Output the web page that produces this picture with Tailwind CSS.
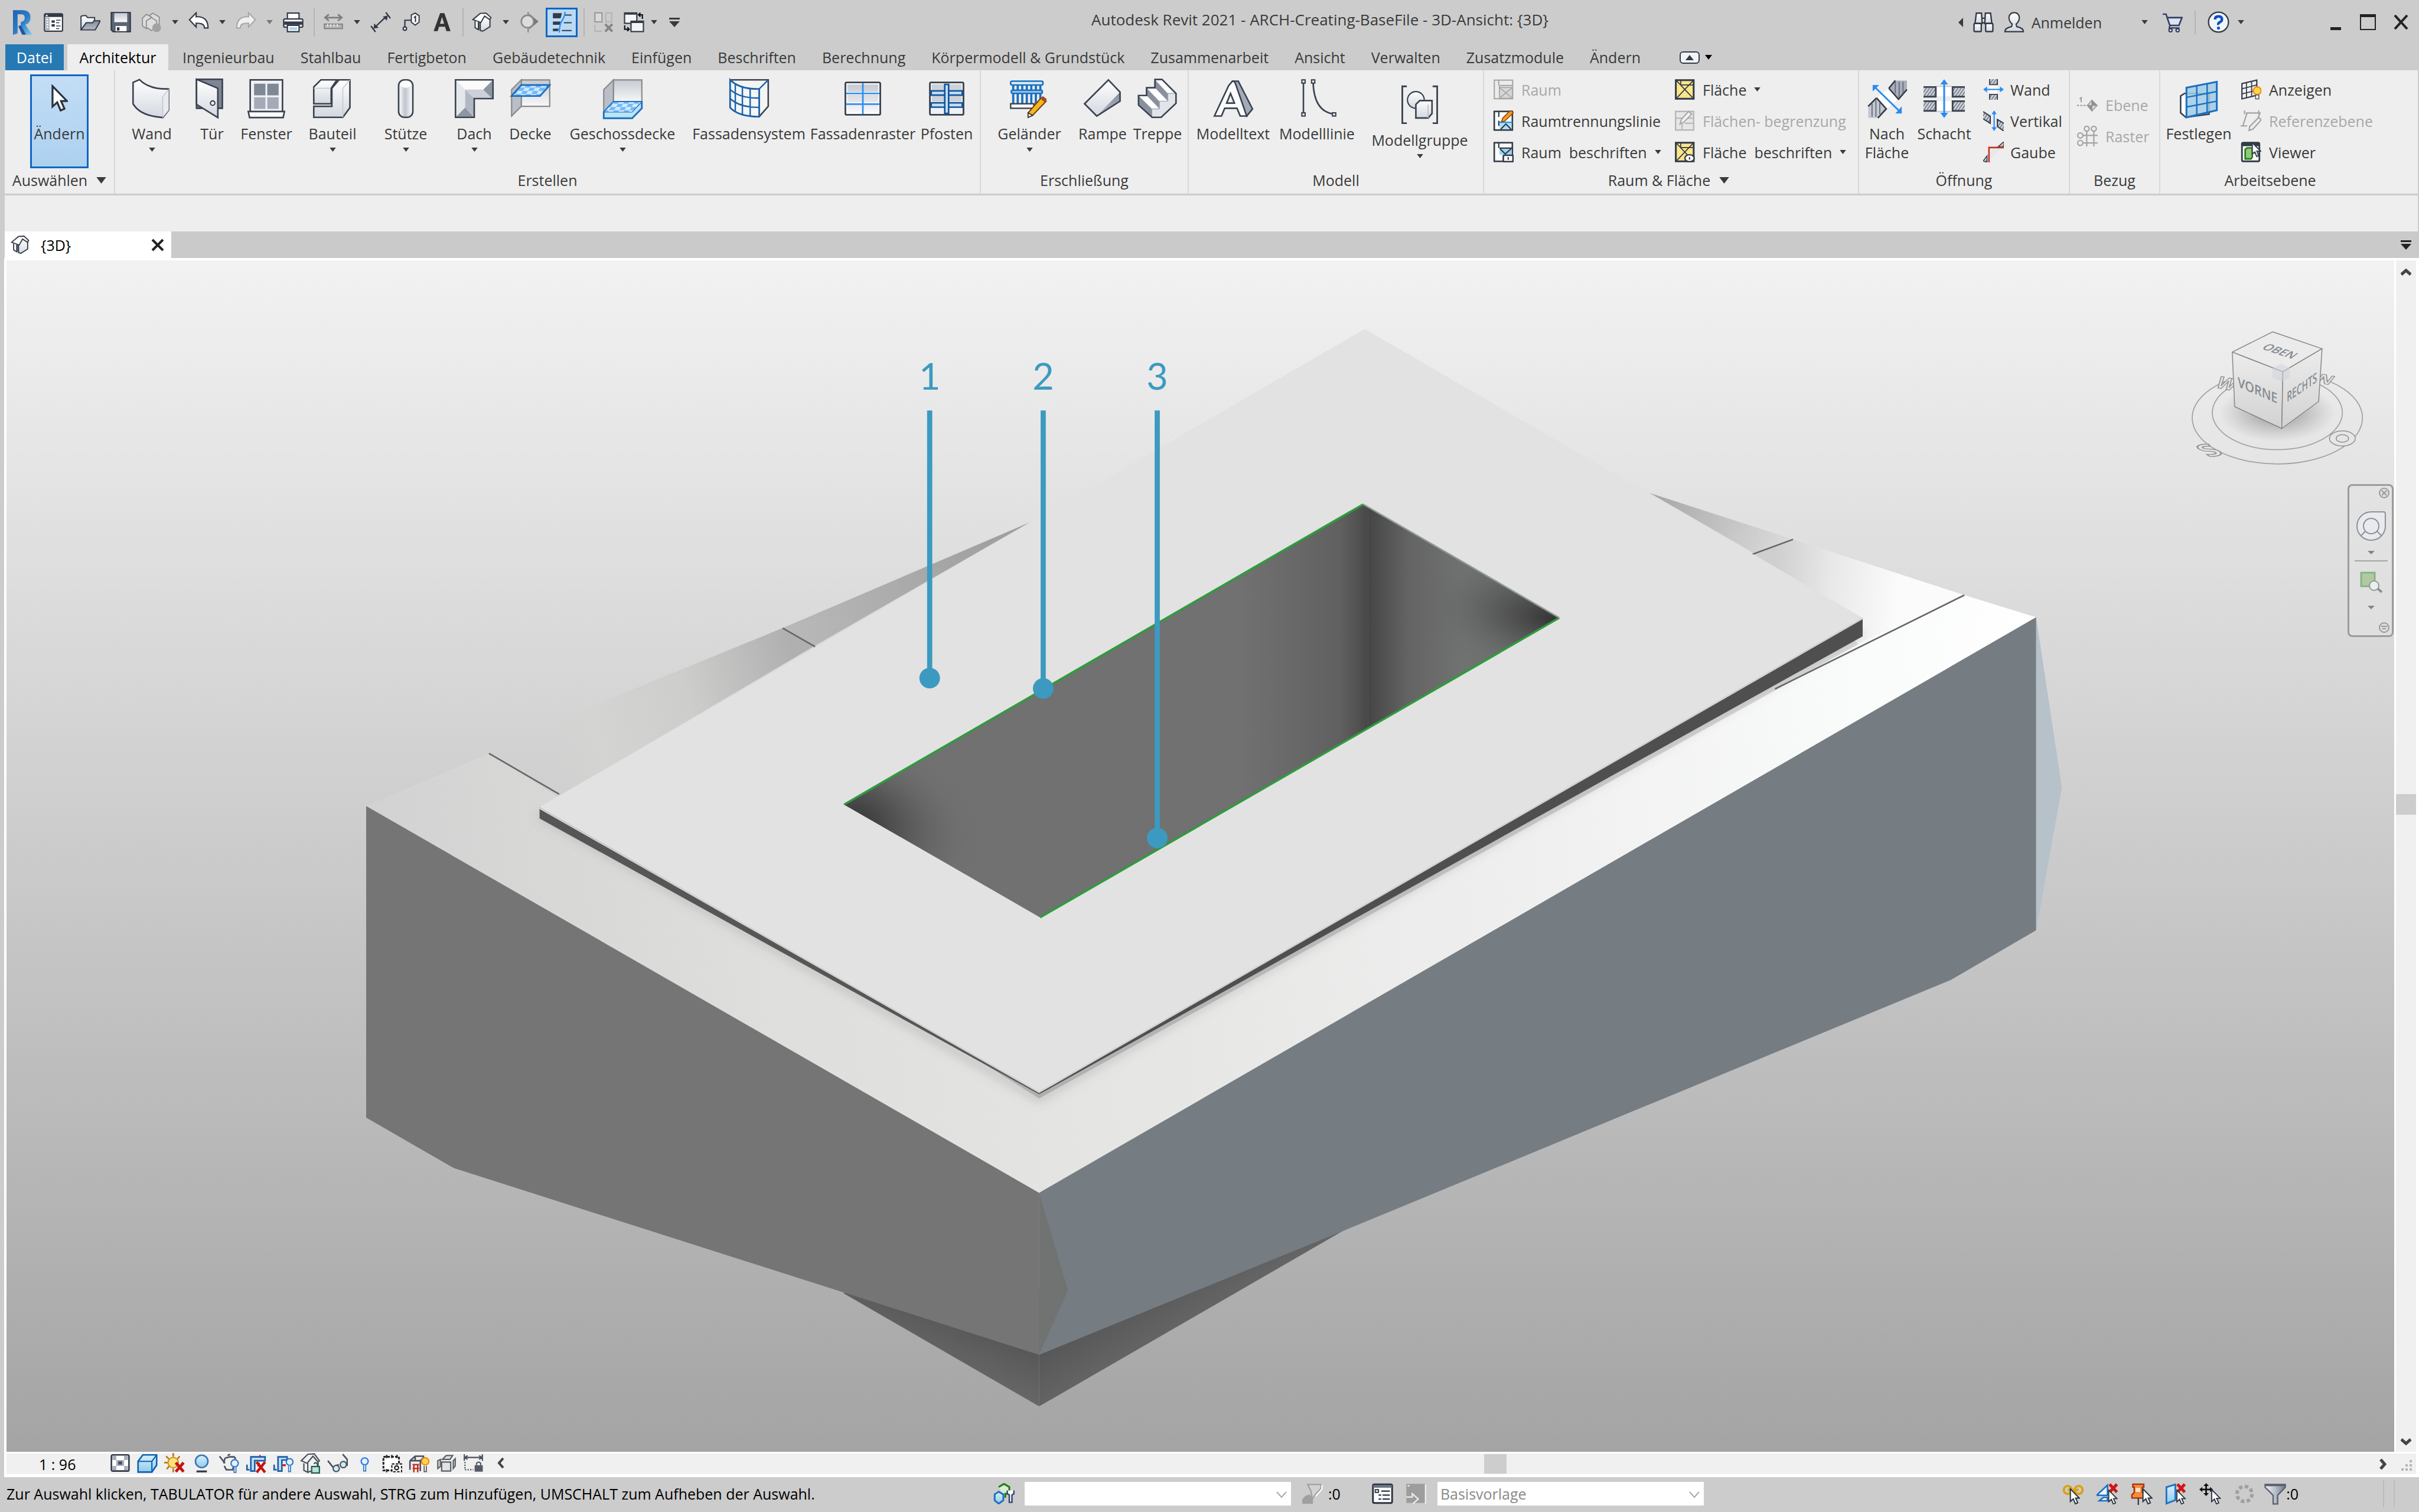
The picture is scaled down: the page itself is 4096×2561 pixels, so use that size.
<!DOCTYPE html>
<html lang="de">
<head>
<meta charset="utf-8">
<title>Autodesk Revit 2021 - ARCH-Creating-BaseFile - 3D-Ansicht: {3D}</title>
<script src="https://cdn.jsdelivr.net/npm/@tailwindcss/browser@4"></script>
</head>
<body class="min-h-screen flex flex-col bg-[#cccccc] text-[#3a3a3a] text-[25px] leading-8 font-['Open_Sans',sans-serif] whitespace-nowrap overflow-hidden">

<!-- Shared gradients and icon symbols -->
<svg class="absolute w-0 h-0" aria-hidden="true">
  <defs>
    <linearGradient id="gw" x1="0" y1="0" x2="0" y2="1"><stop offset="0" stop-color="#fff"/><stop offset="1" stop-color="#d3d7df"/></linearGradient>
    <linearGradient id="gd" x1="0" y1="0" x2="0" y2="1"><stop offset="0" stop-color="#868e9b"/><stop offset="1" stop-color="#b4bac5"/></linearGradient>
    <linearGradient id="gg" x1="0" y1="0" x2="0" y2="1"><stop offset="0" stop-color="#c6cad2"/><stop offset="1" stop-color="#f8f8fa"/></linearGradient>
    <linearGradient id="gh" x1="0" y1="0" x2="1" y2="0"><stop offset="0" stop-color="#fff"/><stop offset=".45" stop-color="#bfc5cf"/><stop offset="1" stop-color="#fff"/></linearGradient>
    <linearGradient id="gb" x1="0" y1="0" x2="0" y2="1"><stop offset="0" stop-color="#d9f0fc"/><stop offset="1" stop-color="#8fcbed"/></linearGradient>
    <linearGradient id="gr" x1="0" y1="0" x2="1" y2="1"><stop offset="0" stop-color="#1f62b5"/><stop offset=".5" stop-color="#2c7cc4"/><stop offset="1" stop-color="#7fd0f2"/></linearGradient>
    <linearGradient id="gf" x1="0" y1="0" x2="1" y2="0"><stop offset="0" stop-color="#f2f3f5"/><stop offset=".5" stop-color="#b9bfc9"/><stop offset="1" stop-color="#727985"/></linearGradient>
    <pattern id="tile" width="8" height="5" patternUnits="userSpaceOnUse" patternTransform="skewX(-30)"><path fill="#cfeafd" d="M0 0H8V5H0Z"/><path fill="#74b8f8" d="M0 0H4V2.5H0ZM4 2.5H8V5H4Z"/></pattern>
    <pattern id="hatch" width="2" height="2" patternUnits="userSpaceOnUse" patternTransform="rotate(35)"><path fill="#cdd1d9" d="M0 0H2V2H0Z"/><path fill="#7b828f" d="M0 0H.8V2H0Z"/></pattern>
    <symbol id="dn" viewBox="0 0 12 8"><path d="M0 0H12L6 8Z" fill="currentColor"/></symbol>
    <symbol id="cur" viewBox="0 0 8 13"><path d="M.8.8V10.4L3 8.4 4.6 12.2 6.4 11.4 4.8 7.8H7.6Z" fill="#fff" stroke="#2b3340" stroke-width=".9"/></symbol>
    <symbol id="redx" viewBox="0 0 7 7"><path d="M1 .8 6 6.2M6 .8 1 6.2" stroke="#d11414" stroke-width="2"/></symbol>

    <!-- title bar -->
    <symbol id="logo" viewBox="0 0 16 19"><path d="M1 0 4 2V18L1 19Z" fill="#153f86"/><path d="M1 0H9Q14.5.5 14.5 5.8 14.5 10 10.5 11.3L16 19H11L7 11.5V9Q10 9 10 5.8 10 3.2 7.4 3.2H4.5V18L1 19Z" fill="url(#gr)"/><path d="M7 11.5 11 19H8L5 12.5Z" fill="#1b56a6"/></symbol>
    <symbol id="q-sheet" viewBox="0 0 16 16"><rect x="1.5" y="1.5" width="14" height="13.5" rx="1" fill="#fff" stroke="#333b48"/><path d="M1.5 1.5H15.5V4H1.5Z" fill="#333b48"/><path d="M2.5 2.3H4V3.5H2.5Z" fill="#bfe3f7"/><path d="M2.2 4.5H5.5V14.3H2.2Z" fill="#aeb4bf"/><path d="M3 6H4.5M3 8H4.5M3 10H4.5M3 12H4.5" stroke="#fff"/><path d="M7 7.5H9.5M7 10.5H9.5" stroke="#333b48" stroke-width="1.8"/><path d="M10.5 6.5H14M10.5 8.5H13M10.5 11H14M10.5 13H13" stroke="#333b48" stroke-width=".7"/></symbol>
    <symbol id="q-open" viewBox="0 0 16 16"><path d="M1 14V3.5L2.5 3H5L6 4.5H11.5V8" fill="url(#gw)" stroke="#333b48" stroke-width=".9"/><path d="M1 14 5 8.5H10L11 7H16L12 14Z" fill="url(#gd)" stroke="#333b48" stroke-width=".9"/></symbol>
    <symbol id="q-save" viewBox="0 0 16 16"><path d="M.6.6H15.4V15.4H2L.6 14Z" fill="#5b6472" stroke="#2b3340" stroke-width=".9"/><path d="M3 1H13V8H3Z" fill="url(#gg)"/><path d="M4 11H12.5V15H4Z" fill="#fff"/><path d="M5 12H7V14.5H5Z" fill="#2b3340"/></symbol>
    <symbol id="q-sync" viewBox="0 0 16 16"><g fill="#dcdcdc" stroke="#8d8d8d" stroke-width=".8"><path d="M5 4 9 1 14 4V10L9 13 5 10Z"/><path d="M1 5 4 2 8 4V11L4 13 1 11Z"/><path d="M4 7 8 4.5 12 7V12L8 14.5 4 12Z"/></g><circle cx="12" cy="12.3" r="3.4" fill="#a2a2a2"/></symbol>
    <symbol id="q-undo" viewBox="0 0 16 16"><path d="M.8 6.2 6 .8V3.8Q15.2 3.4 15.2 12.5H12.4Q12.5 8.6 6 8.8V11.8Z" fill="#fff" stroke="currentColor"/></symbol>
    <symbol id="q-print" viewBox="0 0 16 16"><path d="M3.5 6V1H12.5V6" fill="#fff" stroke="#333b48"/><rect x=".6" y="5.5" width="14.8" height="6.5" rx="1" fill="url(#gw)" stroke="#333b48"/><path d="M1 7.5H15V10H1Z" fill="#333b48"/><path d="M3.5 10.5H12.5V15.4H3.5Z" fill="#fff" stroke="#333b48"/><path d="M5 12H11V14H5Z" fill="#a8d4f0"/></symbol>
    <symbol id="q-meas" viewBox="0 0 16 16"><path d="M2 4.5H14M4.5 2 1.5 4.5 4.5 7M11.500 2 14.500 4.500 11.500 7" stroke="#7d7d7d" stroke-width="1.200" fill="none"/><rect x="1" y="9.500" width="14" height="3.500" fill="#b5b5b5" stroke="#7d7d7d" stroke-width=".8"/><path d="M3.500 9.500V11.500M6 9.500V11.500M8.500 9.500V11.500M11 9.500V11.500" stroke="#eee" stroke-width=".8"/></symbol>
    <symbol id="q-dim" viewBox="0 0 16 16"><path d="M3.500 12 12.500 3.500M.5 11 4 15.500M12 .5 15.500 5" stroke="#333b48" stroke-width="1.100"/><path d="M2.500 13 3 9 6.500 12.300ZM13.500 2.800 9.700 3.800 12.800 6.900Z" fill="#333b48"/></symbol>
    <symbol id="q-tag" viewBox="0 0 16 16"><path d="M8 2.500 11 1 14 3V8L11 10.300 8 8Z" fill="#fff" stroke="#333b48" stroke-width=".9"/><path d="M10 4.500 11.200 3.600V8" stroke="#333b48" fill="none"/><path d="M8 6.500H3V12" stroke="#333b48" fill="none"/><circle cx="3" cy="13" r="1.300" fill="#fff" stroke="#333b48"/></symbol>
    <symbol id="q-a" viewBox="0 0 16 16"><path d="M6.500 1H9.800L14.600 15H11.400L10.300 11.500H5.700L4.600 15H1.500ZM6.400 9.300H9.600L8 4Z" fill="#333"/></symbol>
    <symbol id="q-home" viewBox="0 0 16 16"><path d="M7.500 8V14.800L2.500 12V6.500Z" fill="#6d7582"/><path d="M6.500 14.500V8.500L9.500 3.500 14 5V11.500L8.500 15Z" fill="url(#gw)" stroke="#333b48" stroke-width=".9"/><path d="M.8 6 6.500 1.200 11 1 14.800 4.500 13.800 6 9.800 3.300 7 8.300Z" fill="#fff" stroke="#333b48" stroke-width=".9"/><path d="M2.500 7V12.300L5 13.800V8" fill="#fff" stroke="#333b48" stroke-width=".9"/></symbol>
    <symbol id="q-sec" viewBox="0 0 16 16"><path d="M8 1.500 15 7.500 8 13.500Z" fill="#777"/><circle cx="6.500" cy="7.500" r="4.800" fill="#dcdcdc" stroke="#8a8a8a" stroke-width="1.200"/><path d="M7 0V3M7 12.500V16" stroke="#8a8a8a"/></symbol>
    <symbol id="q-thin" viewBox="0 0 16 16"><path d="M1 1H8L7 5H1ZM1 7.500H7L6.300 10H1ZM1 13H5.500L5 15H1Z" fill="#333b48"/><path d="M10 2.500H15.500M9.500 8.500H15.500M8 14.500H15.500" stroke="#333b48" stroke-width=".9"/><path d="M10.500 0 Q10 4 8 7 T6 16" stroke="#2b8bf2" fill="none"/></symbol>
    <symbol id="q-closeh" viewBox="0 0 16 16"><g fill="#dadada" stroke="#9a9a9a"><rect x="1.500" y=".8" width="5.500" height="7"/></g><g fill="none" stroke="#b5b5b5"><rect x="10" y=".8" width="4.500" height="7"/><path d="M1.500 10V15H7"/></g><path d="M9.500 9.500 15 15.300M15 9.500 9.500 15.300" stroke="#868686" stroke-width="1.800"/></symbol>
    <symbol id="q-switch" viewBox="0 0 16 16"><rect x=".7" y=".9" width="9.500" height="8" fill="#f4f5f7" stroke="#333b48"/><path d="M.7 1.500H10.200" stroke="#333b48" stroke-width="1.400"/><rect x="5.700" y="7.300" width="9.600" height="8" fill="#f4f5f7" stroke="#333b48"/><path d="M5.700 8H15.300" stroke="#333b48" stroke-width="1.400"/><path d="M12 2.300H14.500V5.500M13 .8 11.500 2.300 13 3.800M.8 10.500V13.500H3.500M2.800 12 4.300 13.500 2.800 15" stroke="#111" fill="none"/></symbol>
    <symbol id="q-bino" viewBox="0 0 16 16"><g fill="url(#gw)" stroke="#333b48" stroke-width="1.100"><path d="M6.500 5H9.500V8.500H6.500Z"/><path d="M2.500 1H6.500L7 9H1.500Z"/><path d="M9.500 1H13.500L14.500 9H9Z"/><rect x=".7" y="9" width="5.600" height="6.300" rx=".8"/><rect x="9.700" y="9" width="5.600" height="6.300" rx=".8"/></g></symbol>
    <symbol id="q-user" viewBox="0 0 16 16"><path d="M.8 15.400Q.8 12.500 6 11.500L6.500 9.500Q4 7.500 4 4.500 4.300.6 8 .6T12 4.500Q12 7.500 9.500 9.500L10 11.500Q15.200 12.500 15.200 15.400Z" fill="url(#gw)" stroke="#333b48"/></symbol>
    <symbol id="q-cart" viewBox="0 0 16 16"><path d="M.5 1.800H3L6 10.500H13L15.400 4.500H4" fill="#dde4f2" stroke="#333d63" stroke-width="1.200"/><path d="M6 10.500 5.500 12.500H13.500" fill="none" stroke="#333d63"/><circle cx="6.500" cy="14.300" r="1.200" fill="#fff" stroke="#333d63"/><circle cx="12" cy="14.300" r="1.200" fill="#fff" stroke="#333d63"/></symbol>
    <symbol id="q-help" viewBox="0 0 16 16"><circle cx="8" cy="8" r="7.300" fill="#f2f4f8" stroke="#333b48"/><path d="M5.500 6Q5.500 3.800 8 3.800T10.500 6Q10.500 7.300 9 8T8 10" fill="none" stroke="#0d4fc4" stroke-width="1.900"/><circle cx="8" cy="12.300" r="1.100" fill="#0d4fc4"/></symbol>

    <!-- ribbon, large -->
    <symbol id="b-wand" viewBox="0 0 32 32"><path d="M1.500 3.500 6.500 1.300Q14 9 29 8.500V25L24.500 30.700Q7 29.500 1.500 20Z" fill="url(#gw)" stroke="#3b4350" stroke-width="1.200"/><path d="M24.500 14.500 29 8.800V25L24.500 30.500Z" fill="#e9ebef" stroke="#b5bac4" stroke-width=".5"/></symbol>
    <symbol id="b-tur" viewBox="0 0 32 32"><path d="M4 1H24V23.500H4Z" fill="#7e8693" stroke="#3b4350" stroke-width="1.200"/><path d="M4 1 20.500 8V30.700L4 20.500Z" fill="url(#gw)" stroke="#3b4350" stroke-width="1.200"/><circle cx="16.500" cy="19.500" r="1.700" fill="#fff" stroke="#3b4350"/></symbol>
    <symbol id="b-fen" viewBox="0 0 32 32"><rect x="3.500" y="1.500" width="25" height="25" fill="#f1f2f5" stroke="#3b4350" stroke-width="1.200"/><path d="M6.500 4.500H15.300V13.500H6.500ZM16.700 4.500H25.500V13.500H16.700Z" fill="#808896"/><path d="M6.500 15H15.300V24H6.500ZM16.700 15H25.500V24H16.700Z" fill="#a4abb7"/><path d="M2 26H30L29 30.700H3Z" fill="#fff" stroke="#3b4350" stroke-width="1.200"/></symbol>
    <symbol id="b-bau" viewBox="0 0 32 32"><path d="M1.500 30.500V22H15.500V8L21 1.500H29.500V23L24 30.500Z" fill="url(#gw)" stroke="#3b4350" stroke-width="1.200"/><path d="M24 30.500V8L29.500 1.500" fill="none" stroke="#c5c9d1" stroke-width=".7"/><path d="M1.500 20V7L7 1.500H19.500L15 8V20Z" fill="url(#gw)" stroke="#3b4350" stroke-width="1.200"/><path d="M1.500 8H14.500" stroke="#c5c9d1" stroke-width=".7"/></symbol>
    <symbol id="b-stu" viewBox="0 0 32 32"><rect x="10.500" y="1.500" width="11" height="29" rx="4.500" fill="url(#gh)" stroke="#3b4350" stroke-width="1.200"/><ellipse cx="16" cy="4.800" rx="4.400" ry="2.800" fill="#fff"/></symbol>
    <symbol id="b-dach" viewBox="0 0 32 32"><path d="M1.500 1.500H30.500V16.500H16V30.500H1.500Z" fill="#e4e7ec"/><path d="M2 2 30 2 23 9H9Z" fill="#fbfbfc"/><path d="M9 9H23L30 16H16Z" fill="#ccd0d8"/><path d="M30 2V16L23 9Z" fill="#8d95a3"/><path d="M2 30H15.500L9 23Z" fill="#8d95a3"/><path d="M9 9 16 16V30L9 23Z" fill="#b2b8c3"/><path d="M1.500 1.500H30.500V16H16V30.500H1.500Z" fill="none" stroke="#3b4350" stroke-width="1.200"/></symbol>
    <symbol id="b-decke" viewBox="0 0 32 32"><path d="M9 1.500H31V22H9Z" fill="url(#gg)" stroke="#8a8a8a"/><path d="M1.500 9 9 1.500V22L1.500 29.500Z" fill="#b9bec7" stroke="#8a8a8a"/><path d="M9 5.500H31L23.500 14H1.500Z" fill="url(#tile)" stroke="#1c6fc0" stroke-width="1.300"/></symbol>
    <symbol id="b-gesch" viewBox="0 0 32 32"><path d="M9 1.500H31V19H9Z" fill="url(#gg)" stroke="#8a8a8a"/><path d="M1.500 9 9 1.500V19L1.500 27Z" fill="#b9bec7" stroke="#8a8a8a"/><path d="M9 18.500H31V23.500L23.500 31.200H1.500V26.500Z" fill="#b9e5f6" stroke="#1c6fc0" stroke-width="1.300"/><path d="M9 18.500H31L23.500 26.500H1.500Z" fill="url(#tile)" stroke="#1c6fc0" stroke-width=".5"/></symbol>
    <symbol id="b-fsys" viewBox="0 0 32 32"><path d="M1.500 1.500H31V22L24 30" fill="#f4f4f4" stroke="#3b4350" stroke-width="1.200"/><path d="M1.500 1.500Q9 9 24 8.500V30Q8 30 1.500 23Z" fill="#f4f6f9" stroke="#1d62ab" stroke-width="1.300"/><path d="M24 8.500 31 1.500M5.500 4.500V26.500M11 7V29M17 8.300V29.800M1.500 9Q9 16 24 15.500M1.500 16Q9 23 24 22.800" fill="none" stroke="#1d62ab" stroke-width="1.100"/></symbol>
    <symbol id="b-fras" viewBox="0 0 32 32"><rect x="2.500" y="3.500" width="27" height="25" rx="1" fill="#fff" stroke="#3b4350" stroke-width="1.300"/><path d="M4 5H28V11H4ZM4 13H28V19H4ZM4 21H28V27H4Z" fill="url(#gg)"/><path d="M16 4V28M3 12H29M3 20.300H29" stroke="#2b8bf2" stroke-width="1.200"/></symbol>
    <symbol id="b-pfo" viewBox="0 0 32 32"><rect x="3" y="3.500" width="26" height="25" rx="1" fill="#eff0f3" stroke="#3b4350" stroke-width="1.300"/><path d="M4.500 5H27.500V9H4.500ZM4.500 14H27.500V18.500H4.500Z" fill="#cdd1d8"/><g fill="#bfe0f6" stroke="#14539c" stroke-width="1.200"><path d="M4 10H28V13.300H4ZM4 19.300H28V22.600H4Z"/><path d="M14.500 5H17.500V27.500H14.500Z"/></g></symbol>
    <symbol id="b-gel" viewBox="0 0 32 32"><path d="M3.500 5V20M7 5V20M10.500 5V20M14 5V20M17.500 5V20M21 5V20M24.500 5V17" stroke="#1c6fc0" stroke-width="1.700"/><g fill="#d5ecf9" stroke="#1c6fc0" stroke-width="1.200"><rect x="1.500" y="2.500" width="25" height="3" rx="1"/><rect x="2" y="9.500" width="24" height="2.500" rx="1" fill="#8cc2ea"/></g><rect x="1.500" y="20" width="18" height="3.500" fill="#fff" stroke="#3b4350" stroke-width="1.100"/><path d="M15 30.500V27L25 15.500 29 18 18.500 29Z" fill="#f9b41a" stroke="#6b3b12" stroke-width=".9"/><path d="M24.500 16 26.500 14 29.500 16.500 28 19Z" fill="#a84a1c"/><path d="M15 30.500V27L18.500 29Z" fill="#fff" stroke="#333" stroke-width=".8"/></symbol>
    <symbol id="b-ram" viewBox="0 0 32 32"><path d="M2 20 20.500 1.500 29.500 11V18L11.500 29.500Z" fill="url(#gw)"/><path d="M29.500 11V18L11.500 29.500Z" fill="url(#gd)"/><path d="M2 20 20.500 1.500 29.500 11V18L11.500 29.500Z" fill="none" stroke="#3b4350" stroke-width="1.200"/></symbol>
    <symbol id="b-tre" viewBox="0 0 32 32"><path d="M1.300 13.600H7.500V7.600H14V1.200H19.500L30.300 12V19.600L18.800 30.500H11.800L1.300 21Z" fill="#e1e5ea"/><path d="M14 1.200 24 12V18L14 7.600ZM7.500 7.600 17.500 18V24L7.500 13.600ZM1.300 13.600 11.800 24V30.500L1.300 21Z" fill="#8a919e"/><path d="M14 1.200H19.500L30.300 12H24ZM7.500 7.600H14L24 18H17.500ZM1.300 13.600H7.500L17.500 24H11.800Z" fill="#fff"/><path d="M30.300 12H24V18H17.500V24H11.800" fill="none" stroke="#a4aab5" stroke-width=".6"/><path d="M1.300 13.600H7.500V7.600H14V1.200H19.500L30.300 12V19.600L18.800 30.500H11.800L1.300 21Z" fill="none" stroke="#3b4350" stroke-width="1.200"/></symbol>
    <symbol id="b-mtext" viewBox="0 0 32 32"><path d="M15.500 2.500H20L31 24 26.500 29.500 14 6Z" fill="#a3abb8" stroke="#3b4350" stroke-width="1.200"/><path d="M1.500 29.500 12.500 6 15.500 2.500Q17 2 18 5L26.500 29.500H21.500L19 23.500H9.500L7 29.500ZM11 19.500H17L14 12Z" fill="#fafbfc" stroke="#3b4350" stroke-width="1.200"/></symbol>
    <symbol id="b-mlin" viewBox="0 0 32 32"><path d="M5.500 3V28.500M13 3Q13.500 26 29 28" fill="none" stroke="#3b4350" stroke-width="1.200"/><g fill="#fff" stroke="#3b4350"><rect x="4.300" y="1.500" width="2.500" height="2.500"/><rect x="11.800" y="1.500" width="2.500" height="2.500"/><rect x="4.300" y="27" width="2.500" height="2.500"/><rect x="28" y="27" width="2.500" height="2.500"/></g></symbol>
    <symbol id="b-mgr" viewBox="0 0 32 32"><path d="M6 1.500H2.500V30H6M26 1.500H29.500V30H26" fill="none" stroke="#3b4350" stroke-width="1.300"/><circle cx="13" cy="12" r="6.500" fill="url(#gw)" stroke="#3b4350"/><path d="M13 15.500 16 12.500H25.500V22.500L22.500 26H13Z" fill="url(#gw)" stroke="#3b4350" stroke-width="1.200"/><path d="M22.500 26V15.500" stroke="#b5bac4" stroke-width=".7"/></symbol>
    <symbol id="b-nach" viewBox="0 0 32 32"><path d="M17.500 8 22.500 2H31.500V9L25 16.500Z" fill="#a8afbb"/><path d="M1.500 22 8 15.500 15.500 24 9 31H1.500Z" fill="#c3c8d1"/><path d="M8 15.500 17.500 8 25 16.500 15.500 24Z" fill="#fff"/><path d="M17.500 8 25 16.500 31.500 9M17.500 8 22.500 2M8 15.500 15.500 24 9 31M8 15.500 1.500 22" fill="none" stroke="#333b48" stroke-width="1.200"/><path d="M22.500 3V12M25.500 3V15M28.500 3V12M4.500 20V30M7.500 17V30M10.500 19V28" stroke="#626a77" stroke-width=".8"/><path d="M6.500 7 26 26" stroke="#2b8bf2" stroke-width="1.300"/><path d="M5 5.500H10L5 10.500ZM27.500 27.500V22L22.500 27.500Z" fill="#2b8bf2"/></symbol>
    <symbol id="b-scha" viewBox="0 0 32 32"><path d="M1 7H31V14H1ZM1 18H31V25.500H1Z" fill="#fff"/><g fill="url(#hatch)"><path d="M0 7H10V14H0ZM0 18H10V25.500H0ZM22 7H32V14H22ZM22 18H32V25.500H22Z"/></g><path d="M0 7H9.500V14.500H0M0 18H9.500V25.500H0M32 7H22.500V14.500H32M32 18H22.500V25.500H32" fill="none" stroke="#3b4350" stroke-width="1.300"/><path d="M10 6.500H22M10 26H22" stroke="#c9ccd2"/><path d="M16 3V29" stroke="#2b8bf2" stroke-width="1.400"/><path d="M16 1 19 5H13ZM16 31 19 27H13Z" fill="#2b8bf2"/></symbol>
    <symbol id="b-fest" viewBox="0 0 32 32"><path d="M2 14 5 12H24V28L6 30.500 2 27Z" fill="#fff" stroke="#3b4350" stroke-width="1.200"/><path d="M6.500 7.500 30 3V25L6.500 30.500Z" fill="#9dcbe6" fill-opacity=".85" stroke="#1c6fc0" stroke-width="1.400"/><path d="M14.500 6V29M22.500 4.500V27.500M6.500 15 30 10.500M6.500 22.500 30 18" stroke="#1c6fc0" stroke-width="1.100"/></symbol>

    <!-- ribbon, small -->
    <symbol id="s-raumg" viewBox="0 0 16 16"><rect x="1" y=".8" width="14.200" height="14.400" fill="#ececec" stroke="#a9a9a9"/><path d="M4.500 1V5M5 5H15M5 5V11" stroke="#a9a9a9"/><path d="M5 6.500H15V14.800H5ZM5 6.500 15 14.800M15 6.500 5 14.800" fill="#d8d8d8" stroke="#a9a9a9" stroke-width=".8"/></symbol>
    <symbol id="s-rtl" viewBox="0 0 16 16"><rect x="1" y=".8" width="14" height="14.400" fill="#fff" stroke="#333b48" stroke-width="1.200"/><path d="M4.500 1V5M4.500 8V12" stroke="#333b48"/><path d="M5 9.500H14.400V14.600H5Z" fill="#aee0f5"/><path d="M6 14.600 10 10.500 14 14.600" fill="none" stroke="#333b48"/><path d="M5 9.200H15" stroke="#2b8bf2"/><path d="M6.500 9 7.500 6 13.500 0 15.800 1.800 9.300 8.200Z" fill="#f39c1a" stroke="#8a3a10" stroke-width=".7"/></symbol>
    <symbol id="s-rb" viewBox="0 0 16 16"><rect x="1" y=".8" width="14" height="14.400" fill="#fff" stroke="#333b48" stroke-width="1.200"/><path d="M4.500 1V5M5 5H15" stroke="#333b48"/><path d="M5 5.500H14.500V10H5Z" fill="#9bd6f0"/><path d="M5.500 5.500 9.500 9.500 14 5.500" fill="none" stroke="#333b48"/><rect x="8" y="10.500" width="7.500" height="5" rx=".6" fill="#fff" stroke="#333b48" stroke-width="1.200"/><path d="M11.800 12V14" stroke="#333b48"/></symbol>
    <symbol id="s-fl" viewBox="0 0 16 16"><rect x="1.200" y=".8" width="13.800" height="14.400" fill="#fce58a" stroke="#333b48" stroke-width="1.400"/><path d="M5 1V4M5 4.500H15M1.500 1 14.800 15M14.800 1 1.500 15" stroke="#333b48" stroke-width=".8"/></symbol>
    <symbol id="s-flb" viewBox="0 0 16 16"><rect x="1" y=".8" width="14" height="14.400" fill="#e6e6e6" stroke="#b3b3b3"/><path d="M1 6H15M6 10V15M8 10H15" stroke="#b9b9b9"/><path d="M4.500 10.500 5.500 7 11 .8 13.500 2.800 7.500 9Z" fill="#f2f2f2" stroke="#a9a9a9"/></symbol>
    <symbol id="s-ft" viewBox="0 0 16 16"><rect x="1.200" y=".8" width="13.800" height="14.400" fill="#fce58a" stroke="#333b48" stroke-width="1.400"/><path d="M5 1V4M5 4.500H15M1.500 1 10 10M14.800 1 1.500 15" stroke="#333b48" stroke-width=".8"/><ellipse cx="11.800" cy="12.800" rx="3.600" ry="2.700" fill="#fff" stroke="#333b48" stroke-width="1.100"/><path d="M11.800 12V13.800" stroke="#333b48"/></symbol>
    <symbol id="s-wand" viewBox="0 0 16 16"><path d="M5 0H11V4H5ZM5 12H11V16H5Z" fill="url(#hatch)"/><path d="M5 4H11V12H5Z" fill="#fff"/><path d="M5 0V4.300H11V0M5 16V11.800H11V16" fill="none" stroke="#333b48" stroke-width=".8"/><path d="M2 8H14" stroke="#2b8bf2"/><path d="M0 8 3 5.700V10.300ZM16 8 13 5.700V10.300Z" fill="#2b8bf2"/></symbol>
    <symbol id="s-vert" viewBox="0 0 16 16"><path d="M0 1 6 5V10L0 6.500ZM11 7 16 10V16L11 12.500Z" fill="url(#hatch)"/><path d="M0 1 5.500 4.500V10L0 6.500M16 10 11 7V12.500L16 16" fill="none" stroke="#333b48" stroke-width=".9"/><path d="M8.500 2V14" stroke="#2b8bf2"/><path d="M8.500 0 10.500 3H6.500ZM8.500 16 10.500 13H6.500Z" fill="#2b8bf2"/></symbol>
    <symbol id="s-gau" viewBox="0 0 16 16"><path d="M0 16V13L12 1 16 0V3L4 15Z" fill="#e6e8ec"/><path d="M0 15 3 11V16ZM11.500 4 16 0V4Z" fill="url(#hatch)" stroke="#333b48" stroke-width=".7"/><path d="M4.500 16V4.500H16" fill="none" stroke="#c8321f" stroke-width="1.200"/></symbol>
    <symbol id="s-eb" viewBox="0 0 16 16"><path d="M0 8.500H8" stroke="#9c9c9c" stroke-dasharray="1.500 1"/><path d="M2 3.500 3.200 2.500V6" stroke="#9c9c9c" fill="none" stroke-width=".9"/><path d="M11.500 4V13M7.500 8.500H16M8 8.500 11.500 4.500 15.500 8.500 11.500 12.800Z" fill="#dedede" stroke="#9c9c9c" stroke-width=".8"/><path d="M11.500 4.500 15.500 8.500H11.500ZM11.500 12.800 8 8.500H11.500Z" fill="#8f8f8f"/></symbol>
    <symbol id="s-ra" viewBox="0 0 16 16"><g fill="none" stroke="#a3a3a3"><circle cx="2.500" cy="7.500" r="2"/><circle cx="2.500" cy="13.300" r="2"/><circle cx="7.500" cy="2.300" r="1.900"/><circle cx="13" cy="2.300" r="1.900"/><path d="M7.500 4.500V16M13 4.500V16M4.500 7.500H16M4.500 13.300H16"/></g></symbol>
    <symbol id="s-anz" viewBox="0 0 16 16"><path d="M1 3.500 12.500.8V12.500L1 15.300Z" fill="#f2f2f4" stroke="#333b48"/><path d="M4.500 2.800V14.500M8.500 2V13.500M1 7.500 12.500 4.500M1 11.500 12.500 8.500" stroke="#333b48" stroke-width=".8"/><circle cx="12.800" cy="9" r="3" fill="#ffd84a" stroke="#f08a12"/><rect x="11.600" y="12.300" width="2.500" height="3" fill="#fff" stroke="#555" stroke-width=".7"/></symbol>
    <symbol id="s-ref" viewBox="0 0 16 16"><path d="M4 2H15L11 12M5 2 1.500 12.500M3 0V3M14 0V3M0 12H5" fill="none" stroke="#a3a3a3"/><path d="M6.500 15.500 7 12.500 14 5.500 16 7.300 9.500 14.500Z" fill="#ededed" stroke="#a3a3a3"/></symbol>
    <symbol id="s-view" viewBox="0 0 16 16"><rect x="1" y=".8" width="13.500" height="14.400" rx="1" fill="#fff" stroke="#333b48" stroke-width="1.300"/><path d="M1 1H14.500V3.500H1Z" fill="#333b48"/><path d="M3.500 6 5 4.800H9V12L8 13.300H3.500Z" fill="#8fc879" stroke="#237a1b" stroke-width="1.200"/><path d="M9 .8V9.500L11 8 12.500 11.500 14 10.800 12.600 7.300H15.500Z" fill="#fff" stroke="#333b48" stroke-width=".9"/></symbol>

    <!-- view control bar -->
    <symbol id="v1" viewBox="0 0 16 16"><rect x="1.200" y="1.500" width="13.600" height="12.500" rx="1" fill="#fff" stroke="#333b48" stroke-width="1.200"/><path d="M2 2.300H5V5.500H2ZM11 2.300H14V5.500H11ZM5 5.500H11V10H5ZM2 10H5V13.300H2ZM11 10H14V13.300H11Z" fill="#a9afba"/><path d="M6.500 6.500H9.500V9H6.500Z" fill="#4a515d"/></symbol>
    <symbol id="v2" viewBox="0 0 16 16"><path d="M.8 6.500 4.500 1.500H15.200V9.500L11.500 14.800H.8Z" fill="url(#gb)" stroke="#0d63b5" stroke-width="1.200"/><path d="M.8 6.500H11.500L15.200 1.500M11.500 6.500V14.800" fill="none" stroke="#0d63b5"/></symbol>
    <symbol id="v3" viewBox="0 0 16 16"><path d="M7 0V3M7 12V15M0 7.500H3M1.500 2.500 4 5M12 2.500 10 5M2 12.500 4 10" stroke="#b07a18" stroke-width="1.200"/><circle cx="7" cy="7.500" r="4" fill="#ffe27a" stroke="#d29a1c"/><path d="M9 7.500 15 14.500M15 7.500 9 14.500" stroke="#c41212" stroke-width="2.200"/></symbol>
    <symbol id="v4" viewBox="0 0 16 16"><circle cx="8" cy="6.500" r="4.800" fill="url(#gb)" stroke="#3a78b0" stroke-width="1.200"/><path d="M4 14.300H12" stroke="#333b48" stroke-width="1.500"/></symbol>
    <symbol id="v5" viewBox="0 0 16 16"><path d="M5 4 9 3H12L13 4 11 13H6L4.500 10M5 8 .8 2.500M7 2 9 1M5 4 4 8" fill="none" stroke="#4a515d" stroke-width="1.200"/><circle cx="12.500" cy="8" r="2.800" fill="#e5f2ff" stroke="#2b79c9"/><path d="M12 11V15H13.500V11" fill="#fff" stroke="#2b79c9" stroke-width=".8"/></symbol>
    <symbol id="v6" viewBox="0 0 16 16"><path d="M4 3H15V6H7V14H4ZM1 9V13H3" fill="#bcdcf5" stroke="#1c5ea8" stroke-width="1.200"/><path d="M11 1.500V3M8 8H11M9 10H11" stroke="#d11414"/><path d="M8.500 7 15 15M15 7 8.500 15" stroke="#c41212" stroke-width="2"/></symbol>
    <symbol id="v7" viewBox="0 0 16 16"><path d="M4 3H11V5.500H7V14H4ZM1 9V13H3" fill="#bcdcf5" stroke="#1c5ea8" stroke-width="1.200"/><path d="M7.500 9.500H10" stroke="#d11414" stroke-width="1.500"/><circle cx="13" cy="7" r="2.600" fill="#e5f2ff" stroke="#2b79c9"/><path d="M12.200 10V14.500H13.700V10" fill="#fff" stroke="#2b79c9" stroke-width=".8"/></symbol>
    <symbol id="v8" viewBox="0 0 16 16"><path d="M1 6 6 1 11 .6 15 6 14 7 10 2.500 5.500 8ZM3 8V13.500L6 15V8M6 15 8.500 14M14 7V10" fill="#eff0f3" stroke="#4a515d"/><rect x="9" y="10.500" width="6" height="5" fill="#b9e3dc" stroke="#24584f"/><path d="M13.500 10.500V8.500Q12 6.500 10.800 8.500" fill="none" stroke="#24584f"/></symbol>
    <symbol id="v9" viewBox="0 0 16 16"><path d="M.5 6 4.500 11M9 9 6 10M12 1 15.500 5V10" fill="none" stroke="#4a515d" stroke-width="1.200"/><circle cx="7" cy="12" r="2.400" fill="#cdeef3" stroke="#4a515d"/><circle cx="12.500" cy="9" r="2.400" fill="#cdeef3" stroke="#4a515d"/></symbol>
    <symbol id="v10" viewBox="0 0 16 16"><circle cx="8" cy="6.500" r="2.700" fill="#e5f2ff" stroke="#2b79e9"/><path d="M7.200 9.500V14H8.800V9.500" fill="#fff" stroke="#2b79c9" stroke-width=".8"/></symbol>
    <symbol id="v11" viewBox="0 0 16 16"><rect x="1.500" y="3" width="12" height="10.500" fill="#fff" stroke="#222" stroke-width="1.400" stroke-dasharray="2 1"/><path d="M4 1.500V4M8 1.500V4M12 1.500V4M4 12.500V15" stroke="#222"/><rect x="8" y="8.500" width="7.500" height="6" fill="#fff" stroke="#222" stroke-dasharray="2 1"/><circle cx="11.700" cy="11.500" r="1.500" fill="none" stroke="#222"/></symbol>
    <symbol id="v12" viewBox="0 0 16 16"><path d="M1 6 5 2.500H12M1 6H9V14M9 6 12 3M1 6V13M5 2.500V6" fill="none" stroke="#4a515d" stroke-width="1.200"/><path d="M3 9H8M4 9V15M7 9V15M3 12H8" stroke="#c8321f" stroke-width="1.200"/><circle cx="12.800" cy="6.500" r="2.800" fill="#ffd84a" stroke="#f08a12"/><path d="M12 10V14.500H13.700V10" fill="#fff" stroke="#555" stroke-width=".8"/></symbol>
    <symbol id="v13" viewBox="0 0 16 16"><g fill="#e2e2e2" stroke="#5a5f68"><path d="M5 5 8 2H13L11 5ZM13.500 6 15 4.500V10L13.500 12ZM1.500 6V12L3.500 10.500V5Z"/><path d="M4.500 7H11.500V14H4.500Z"/></g></symbol>
    <symbol id="v14" viewBox="0 0 16 16"><path d="M1 1V6M15 1V6M1 3.500H15M3.500 2 1.500 3.500 3.500 5M12.500 2 14.500 3.500 12.500 5" fill="none" stroke="#4a515d"/><path d="M1.500 7V13H8" fill="none" stroke="#4a515d" stroke-dasharray="1 1"/><rect x="9" y="9.500" width="6.300" height="5" fill="#555b66"/><path d="M10.500 9.500V8Q12 6 13.700 8V9.500" fill="none" stroke="#555b66"/></symbol>

    <!-- status bar -->
    <symbol id="t-ws" viewBox="0 0 16 16"><path d="M4 3 8 .6 12 3V8H9V11" fill="#d8efcf" stroke="#237a1b" stroke-width="1.400"/><path d="M1 8.500 4 6.500 7.500 8.500V13L4 15.500 1 13Z" fill="url(#gb)" stroke="#1c6fc0" stroke-width="1.300"/><path d="M10.500 5.500V8L12 9V14.500H14V9L15.500 8V5.500" fill="#fff" stroke="#34466e" stroke-width="1.100"/></symbol>
    <symbol id="t-ef" viewBox="0 0 16 16"><path d="M.5 15.500V12L3 9.500 6 8.500 8.500 12V15.500Z" fill="#a0a0a0"/><path d="M4.500 1H14.500V4L10 9 8 12 7 6Z" fill="#d2d2d2" stroke="#a0a0a0"/><path d="M15.300 1.500V4.500L10.500 10" fill="none" stroke="#fff"/></symbol>
    <symbol id="t-do" viewBox="0 0 16 16"><rect x=".8" y="1" width="14.400" height="14" rx="1" fill="#fff" stroke="#2b3340" stroke-width="1.300"/><path d="M1 1.500H15V3.500H1Z" fill="#6b7482"/><path d="M2.500 5H5V7H2.500Z" fill="none" stroke="#2b3340" stroke-width=".8"/><path d="M7 6H13.500M5 9H7M8 9H13.500M5 12H7M8 12H13.500" stroke="#2b3340"/></symbol>
    <symbol id="t-act" viewBox="0 0 16 16"><path d="M1 .5H15V15H1V12H5V9L9 12V15H1Z" fill="#9d9d9d"/><path d="M1 10.500H5.500V8L10 12 6 15.500M15.500 1V15.500M2 2H3.500" stroke="#eee" fill="none"/></symbol>
    <symbol id="t-link" viewBox="0 0 16 16"><g fill="none" stroke="#d9a312" stroke-width="1.700"><circle cx="4" cy="5" r="2.900"/><circle cx="12" cy="5" r="2.900"/><path d="M4 5H12"/></g><use href="#cur" x="5" y="3.500" width="8" height="12.500"/></symbol>
    <symbol id="t-und" viewBox="0 0 16 16"><path d="M0 9 8 1.500V9ZM2 13 5 10.500H8V13Z" fill="#e8f3fb" stroke="#1c6fc0" stroke-width="1.100"/><use href="#redx" x="8.500" y="0" width="7.500" height="7.500"/><use href="#cur" x="8" y="4.500" width="7.500" height="11.500"/></symbol>
    <symbol id="t-pin" viewBox="0 0 16 16"><path d="M1.500.8H9.500V3H8.500V7L10 8.500V11H.8V8.500L2.500 7V3H1.500Z" fill="#f58a3c" stroke="#a3340e"/><path d="M3.500 3.500H7V6.500H3.500Z" fill="#ffe0c0"/><path d="M5.500 11V16" stroke="#333b48"/><use href="#cur" x="8" y="3.500" width="8" height="12.500"/></symbol>
    <symbol id="t-face" viewBox="0 0 16 16"><path d="M1 3 7.500 1V12.500L1 15Z" fill="url(#gb)" stroke="#1c6fc0" stroke-width="1.200"/><use href="#redx" x="8" y="0" width="7.500" height="7.500"/><use href="#cur" x="7.500" y="4.500" width="8" height="11.500"/></symbol>
    <symbol id="t-drag" viewBox="0 0 16 16"><path d="M5 1V8.500M1 4.700H9" stroke="#111" stroke-width="1.200"/><path d="M5 0 7 2.200H3ZM5 9.500 7 7.300H3ZM0 4.700 2.200 2.800V6.600ZM10 4.700 7.800 2.800V6.600Z" fill="#111"/><use href="#cur" x="8" y="4" width="8" height="12"/></symbol>
    <symbol id="t-gear" viewBox="0 0 16 16"><circle cx="8" cy="8" r="5.500" fill="none" stroke="#a0a0a0" stroke-width="2.600" stroke-dasharray="2.600 1.720"/></symbol>
    <symbol id="t-fil" viewBox="0 0 16 16"><path d="M.6 1H15.400V3L9.800 9V15.300H6.500V9L.6 3Z" fill="url(#gf)" stroke="#5a616d"/><path d="M.6 1.500H15.400" stroke="#5a616d" stroke-width="1.500"/></symbol>
  </defs>
</svg>

<!-- Title bar -->
<header class="h-[75px] shrink-0 flex items-center relative pl-5 pr-[18px]">
  <nav class="flex items-center gap-[17px]" aria-label="Schnellzugriff">
    <button aria-label="Revit"><svg class="block w-[35px] h-[42px]"><use href="#logo"/></svg></button>
    <button class="mr-[11px]" aria-label="Start"><svg class="block size-[35px]"><use href="#q-sheet"/></svg></button>
    <button aria-label="Öffnen"><svg class="block size-[35px]"><use href="#q-open"/></svg></button>
    <button aria-label="Speichern"><svg class="block size-[35px]"><use href="#q-save"/></svg></button>
    <button aria-label="Synchronisieren"><svg class="block size-[35px]"><use href="#q-sync"/></svg></button>
    <svg class="w-[11px] h-[7px]"><use href="#dn"/></svg>
    <button class="text-[#333b48]" aria-label="Rückgängig"><svg class="block size-[35px]"><use href="#q-undo"/></svg></button>
    <svg class="w-[11px] h-[7px]"><use href="#dn"/></svg>
    <button class="text-[#9a9a9a] -scale-x-100" aria-label="Wiederholen"><svg class="block size-[35px] opacity-70"><use href="#q-undo"/></svg></button>
    <svg class="w-[11px] h-[7px] text-[#777]"><use href="#dn"/></svg>
    <button aria-label="Drucken"><svg class="block size-[35px]"><use href="#q-print"/></svg></button>
    <span class="w-0.5 h-12 bg-[#b4b4b4] -mr-[3px]"></span>
    <button aria-label="Messen"><svg class="block size-[35px]"><use href="#q-meas"/></svg></button>
    <svg class="w-[11px] h-[7px]"><use href="#dn"/></svg>
    <button aria-label="Bemaßung"><svg class="block size-[35px]"><use href="#q-dim"/></svg></button>
    <button aria-label="Beschriftung"><svg class="block size-[35px]"><use href="#q-tag"/></svg></button>
    <button aria-label="Text"><svg class="block size-[35px]"><use href="#q-a"/></svg></button>
    <span class="w-0.5 h-12 bg-[#b4b4b4] -mr-[3px]"></span>
    <button aria-label="3D-Ansicht"><svg class="block size-[35px]"><use href="#q-home"/></svg></button>
    <svg class="w-[11px] h-[7px]"><use href="#dn"/></svg>
    <button aria-label="Schnitt"><svg class="block size-[35px]"><use href="#q-sec"/></svg></button>
    <button class="-mx-[7px] w-[54px] h-[50px] border-[3px] border-[#0f66c3] bg-[#b9daf6] flex items-center justify-center" aria-label="Dünne Linien"><svg class="size-[35px]"><use href="#q-thin"/></svg></button>
    <span class="w-0.5 h-12 bg-[#b4b4b4] -mr-[3px]"></span>
    <button aria-label="Verdeckte schließen"><svg class="block size-[35px]"><use href="#q-closeh"/></svg></button>
    <button aria-label="Fenster wechseln"><svg class="block size-[35px]"><use href="#q-switch"/></svg></button>
    <svg class="-ml-[6px] w-[11px] h-[7px]"><use href="#dn"/></svg>
    <button class="ml-[3px]" aria-label="Anpassen"><svg class="block w-[18px] h-4" viewBox="0 0 18 16"><path d="M0 0H18V3H0ZM0 6H18L9 16Z" fill="#3a3a3a"/></svg></button>
  </nav>
  <h1 class="absolute left-[1848px] top-[17px] text-[26px]">Autodesk Revit 2021 - ARCH-Creating-BaseFile - 3D-Ansicht: {3D}</h1>
  <div class="ml-auto flex items-center">
    <svg class="w-2 h-4" viewBox="0 0 8 16"><path d="M8 0V16L0 8Z" fill="#3a3a3a"/></svg>
    <button class="ml-[17px]" aria-label="Suchen"><svg class="block size-[35px]"><use href="#q-bino"/></svg></button>
    <button class="ml-[17px] flex items-center gap-3"><svg class="size-[35px]"><use href="#q-user"/></svg>Anmelden</button>
    <svg class="ml-[67px] w-[11px] h-[7px]"><use href="#dn"/></svg>
    <button class="ml-6" aria-label="App Store"><svg class="block size-[35px]"><use href="#q-cart"/></svg></button>
    <span class="ml-5 w-0.5 h-10 bg-[#b4b4b4]"></span>
    <button class="ml-5" aria-label="Hilfe"><svg class="block size-[37px]"><use href="#q-help"/></svg></button>
    <svg class="ml-[14px] w-[11px] h-[7px]"><use href="#dn"/></svg>
    <button class="ml-[146px]" aria-label="Minimieren"><svg class="block w-[18px] h-[27px]" viewBox="0 0 18 27"><path d="M0 22H18V27H0Z" fill="#222"/></svg></button>
    <button class="ml-8" aria-label="Maximieren"><svg class="block size-[27px]" viewBox="0 0 27 27"><path d="M1 1H26V26H1Z" fill="none" stroke="#222" stroke-width="2"/><path d="M0 3H27" stroke="#222" stroke-width="4"/></svg></button>
    <button class="ml-[30px]" aria-label="Schließen"><svg class="block size-[25px]" viewBox="0 0 25 25"><path d="M2 1 23 24M23 1 2 24" stroke="#222" stroke-width="4"/></svg></button>
  </div>
</header>

<!-- Ribbon tabs -->
<nav class="h-11 shrink-0 flex pl-[9px]" aria-label="Menüband">
  <button class="w-[99px] mr-[6px] bg-[#2779b3] text-white">Datei</button>
  <button class="w-[171px] bg-[#eeeeee] text-black mr-0.5">Architektur</button>
  <button class="px-[22px]">Ingenieurbau</button>
  <button class="px-[22px]">Stahlbau</button>
  <button class="px-[22px]">Fertigbeton</button>
  <button class="px-[22px]">Gebäudetechnik</button>
  <button class="px-[22px]">Einfügen</button>
  <button class="px-[22px]">Beschriften</button>
  <button class="px-[22px]">Berechnung</button>
  <button class="px-[22px]">Körpermodell &amp; Grundstück</button>
  <button class="px-[22px]">Zusammenarbeit</button>
  <button class="px-[22px]">Ansicht</button>
  <button class="px-[22px]">Verwalten</button>
  <button class="px-[22px]">Zusatzmodule</button>
  <button class="px-[22px]">Ändern</button>
  <button class="ml-11 flex items-center gap-[9px] text-black" aria-label="Multifunktionsleiste minimieren"><svg class="w-[34px] h-[21px]" viewBox="0 0 34 21"><rect x="1" y="1" width="32" height="19" rx="5" fill="#f2f3f6" stroke="#333b48" stroke-width="2"/><path d="M10 15H24L17 6Z" fill="#333b48"/></svg><svg class="w-3 h-2"><use href="#dn"/></svg></button>
</nav>

<!-- Ribbon panels -->
<main class="flex-1 flex flex-col min-h-0">
<section class="shrink-0 ml-2 mr-0.5 h-[212px] bg-[#eeeeee] border-b-[3px] border-[#cccccc] flex">
  <div class="w-[187px] border-r-2 border-[#d9d9d9] flex flex-col">
    <button class="mt-[7px] ml-[43px] w-[99px] h-[159px] border-[3px] border-[#0f66c3] bg-linear-to-b from-[#c3ddf5] to-[#add1f0] flex flex-col items-center"><svg class="mt-[14px] w-[29px] h-[47px]"><use href="#cur"/></svg><span class="mt-[20px]">Ändern</span></button>
    <div class="mt-1 flex items-center justify-center gap-[15px]">Auswählen<svg class="w-[17px] h-[11px]"><use href="#dn"/></svg></div>
  </div>
  <div class="w-[1466px] border-r-2 border-[#d9d9d9] flex flex-col">
    <div class="h-[170px] flex items-start pl-[5px] pt-[13px]">
      <button class="w-[114px] flex flex-col items-center"><svg class="size-[70px] mb-2"><use href="#b-wand"/></svg>Wand<svg class="mt-2 w-[11px] h-[7px]"><use href="#dn"/></svg></button>
      <button class="w-[90px] flex flex-col items-center"><svg class="size-[70px] mb-2"><use href="#b-tur"/></svg>Tür</button>
      <button class="w-[94px] flex flex-col items-center"><svg class="size-[70px] mb-2"><use href="#b-fen"/></svg>Fenster</button>
      <button class="w-[130px] flex flex-col items-center"><svg class="size-[70px] mb-2"><use href="#b-bau"/></svg>Bauteil<svg class="mt-2 w-[11px] h-[7px]"><use href="#dn"/></svg></button>
      <button class="w-[118px] flex flex-col items-center"><svg class="size-[70px] mb-2"><use href="#b-stu"/></svg>Stütze<svg class="mt-2 w-[11px] h-[7px]"><use href="#dn"/></svg></button>
      <button class="w-[114px] flex flex-col items-center"><svg class="size-[70px] mb-2"><use href="#b-dach"/></svg>Dach<svg class="mt-2 w-[11px] h-[7px]"><use href="#dn"/></svg></button>
      <button class="w-[76px] flex flex-col items-center"><svg class="size-[70px] mb-2"><use href="#b-decke"/></svg>Decke</button>
      <button class="w-[236px] flex flex-col items-center"><svg class="size-[70px] mb-2"><use href="#b-gesch"/></svg>Geschossdecke<svg class="mt-2 w-[11px] h-[7px]"><use href="#dn"/></svg></button>
      <button class="w-[192px] flex flex-col items-center"><svg class="size-[70px] mb-2"><use href="#b-fsys"/></svg>Fassadensystem</button>
      <button class="w-[194px] flex flex-col items-center"><svg class="size-[70px] mb-2"><use href="#b-fras"/></svg>Fassadenraster</button>
      <button class="w-[90px] flex flex-col items-center"><svg class="size-[70px] mb-2"><use href="#b-pfo"/></svg>Pfosten</button>
    </div>
    <div class="text-center">Erstellen</div>
  </div>
  <div class="w-[352px] border-r-2 border-[#d9d9d9] flex flex-col">
    <div class="h-[170px] flex items-start pl-[7px] pt-[13px]">
      <button class="w-[150px] flex flex-col items-center"><svg class="size-[70px] mb-2"><use href="#b-gel"/></svg>Geländer<svg class="mt-2 w-[11px] h-[7px]"><use href="#dn"/></svg></button>
      <button class="w-[98px] flex flex-col items-center"><svg class="size-[70px] mb-2"><use href="#b-ram"/></svg>Rampe</button>
      <button class="w-[88px] flex flex-col items-center"><svg class="size-[70px] mb-2"><use href="#b-tre"/></svg>Treppe</button>
    </div>
    <div class="text-center">Erschließung</div>
  </div>
  <div class="w-[500px] border-r-2 border-[#d9d9d9] flex flex-col">
    <div class="h-[170px] flex items-start pl-[5px] pt-[13px]">
      <button class="w-[140px] flex flex-col items-center"><svg class="size-[70px] mb-2"><use href="#b-mtext"/></svg>Modelltext</button>
      <button class="w-[144px] flex flex-col items-center"><svg class="size-[70px] mb-2"><use href="#b-mlin"/></svg>Modelllinie</button>
      <button class="mt-[11px] w-[204px] flex flex-col items-center"><svg class="size-[70px] mb-2"><use href="#b-mgr"/></svg>Modellgruppe<svg class="mt-2 w-[11px] h-[7px]"><use href="#dn"/></svg></button>
    </div>
    <div class="text-center">Modell</div>
  </div>
  <div class="w-[635px] border-r-2 border-[#d9d9d9] flex flex-col">
    <div class="h-[170px] flex items-start pl-[15px] pt-[6px]">
      <div class="w-[307px] flex flex-col">
        <button disabled class="h-[53px] flex items-center gap-[13px] text-[#a8a8a8]"><svg class="size-[35px]"><use href="#s-raumg"/></svg>Raum</button>
        <button class="h-[53px] flex items-center gap-[13px]"><svg class="size-[35px]"><use href="#s-rtl"/></svg>Raumtrennungslinie</button>
        <button class="h-[53px] flex items-center gap-[13px]"><svg class="size-[35px]"><use href="#s-rb"/></svg>Raum&nbsp; beschriften<svg class="w-[11px] h-[7px]"><use href="#dn"/></svg></button>
      </div>
      <div class="flex flex-col">
        <button class="h-[53px] flex items-center gap-[13px]"><svg class="size-[35px]"><use href="#s-fl"/></svg>Fläche<svg class="w-[11px] h-[7px]"><use href="#dn"/></svg></button>
        <button disabled class="h-[53px] flex items-center gap-[13px] text-[#a8a8a8]"><svg class="size-[35px]"><use href="#s-flb"/></svg>Flächen- begrenzung</button>
        <button class="h-[53px] flex items-center gap-[13px]"><svg class="size-[35px]"><use href="#s-ft"/></svg>Fläche&nbsp; beschriften<svg class="w-[11px] h-[7px]"><use href="#dn"/></svg></button>
      </div>
    </div>
    <div class="flex items-center justify-center gap-[15px] pr-2">Raum &amp; Fläche<svg class="w-[17px] h-[11px]"><use href="#dn"/></svg></div>
  </div>
  <div class="w-[357px] border-r-2 border-[#d9d9d9] flex flex-col">
    <div class="h-[170px] flex items-start pl-[2px]">
      <button class="mt-[13px] w-[90px] flex flex-col items-center"><svg class="size-[70px] mb-2"><use href="#b-nach"/></svg>Nach<br>Fläche</button>
      <button class="mt-[13px] w-[104px] flex flex-col items-center"><svg class="size-[70px] mb-2"><use href="#b-scha"/></svg>Schacht</button>
      <div class="mt-[6px] ml-[14px] flex flex-col">
        <button class="h-[53px] flex items-center gap-[11px]"><svg class="size-[35px]"><use href="#s-wand"/></svg>Wand</button>
        <button class="h-[53px] flex items-center gap-[11px]"><svg class="size-[35px]"><use href="#s-vert"/></svg>Vertikal</button>
        <button class="h-[53px] flex items-center gap-[11px]"><svg class="size-[35px]"><use href="#s-gau"/></svg>Gaube</button>
      </div>
    </div>
    <div class="text-center">Öffnung</div>
  </div>
  <div class="w-[153px] border-r-2 border-[#d9d9d9] flex flex-col text-[#a8a8a8]">
    <div class="h-[170px] flex flex-col pl-3 pt-8">
      <button disabled class="h-[53px] flex items-center gap-[13px]"><svg class="size-[35px]"><use href="#s-eb"/></svg>Ebene</button>
      <button disabled class="h-[53px] flex items-center gap-[13px]"><svg class="size-[35px]"><use href="#s-ra"/></svg>Raster</button>
    </div>
    <div class="text-center text-[#3a3a3a]">Bezug</div>
  </div>
  <div class="w-[372px] flex flex-col">
    <div class="h-[170px] flex items-start pl-[2px]">
      <button class="mt-[13px] w-[126px] flex flex-col items-center"><svg class="size-[70px] mb-2"><use href="#b-fest"/></svg>Festlegen</button>
      <div class="mt-[6px] ml-[8px] flex flex-col">
        <button class="h-[53px] flex items-center gap-[13px]"><svg class="size-[35px]"><use href="#s-anz"/></svg>Anzeigen</button>
        <button disabled class="h-[53px] flex items-center gap-[13px] text-[#a8a8a8]"><svg class="size-[35px]"><use href="#s-ref"/></svg>Referenzebene</button>
        <button class="h-[53px] flex items-center gap-[13px]"><svg class="size-[35px]"><use href="#s-view"/></svg>Viewer</button>
      </div>
    </div>
    <div class="text-center">Arbeitsebene</div>
  </div>
</section>

<!-- Options bar -->
<div class="h-[61px] shrink-0 ml-2 mr-0.5 bg-[#eeeeee]"></div>

<!-- View tabs -->
<div class="h-[45px] shrink-0 ml-2 flex items-center bg-[#cacaca] pr-[13px]">
  <div class="self-stretch w-[282px] bg-white flex items-center pl-[10px] pr-3">
    <svg class="size-[33px]"><use href="#q-home"/></svg><button class="ml-[18px] text-black">{3D}</button>
    <button class="ml-auto" aria-label="Ansicht schließen"><svg class="block size-[22px]" viewBox="0 0 22 22"><path d="M2 2 20 20M20 2 2 20" stroke="#222" stroke-width="4"/></svg></button>
  </div>
  <button class="ml-auto" aria-label="Ansichten"><svg class="block w-[18px] h-4" viewBox="0 0 18 16"><path d="M0 0H18V3H0ZM0 6H18L9 16Z" fill="#222"/></svg></button>
</div>

<!-- Drawing area -->
<div class="flex-1 min-h-0 ml-[7px] pl-1 pt-1 pb-[3px] bg-white flex gap-[3px]">
  <div class="flex-1 relative min-w-0">
    <svg class="absolute inset-0 w-full h-full" viewBox="13 505 4627 2310" preserveAspectRatio="none" role="img" aria-label="3D-Modell">
      <defs>
        <linearGradient id="bg" x1="0" y1="0" x2="0" y2="1"><stop offset="0" stop-color="#f2f2f2"/><stop offset="1" stop-color="#a4a4a4"/></linearGradient>
        <linearGradient id="strip" gradientUnits="userSpaceOnUse" x1="710" y1="1560" x2="3945" y2="1200"><stop offset="0" stop-color="#d2d2d2"/><stop offset=".22" stop-color="#dededc"/><stop offset=".45" stop-color="#e6e6e5"/><stop offset=".7" stop-color="#f0f0f0"/><stop offset=".9" stop-color="#fafbfb"/><stop offset="1" stop-color="#fff"/></linearGradient>
        <linearGradient id="ul" gradientUnits="userSpaceOnUse" x1="1020" y1="1420" x2="1540" y2="1290"><stop offset="0" stop-color="#d2d2d1" stop-opacity="0"/><stop offset=".25" stop-color="#d4d4d3"/><stop offset=".6" stop-color="#cdcdcc"/><stop offset="1" stop-color="#b0b0b0"/></linearGradient>
        <linearGradient id="ul2" gradientUnits="userSpaceOnUse" x1="1550" y1="1240" x2="1996" y2="1012"><stop offset="0" stop-color="#b8b8b8"/><stop offset=".5" stop-color="#a9a9a9"/><stop offset="1" stop-color="#9c9c9c"/></linearGradient>
        <linearGradient id="ur" gradientUnits="userSpaceOnUse" x1="3200" y1="960" x2="3460" y2="1080"><stop offset="0" stop-color="#a6a6a6"/><stop offset="1" stop-color="#dcdcdc"/></linearGradient>
        <linearGradient id="ur2" gradientUnits="userSpaceOnUse" x1="3440" y1="1110" x2="3680" y2="1130"><stop offset="0" stop-color="#cfcfcf"/><stop offset=".45" stop-color="#e8e8e8"/><stop offset="1" stop-color="#fbfbfb"/></linearGradient>
        <linearGradient id="pitL" gradientUnits="userSpaceOnUse" x1="2400" y1="0" x2="2652" y2="0"><stop offset="0" stop-color="#707170"/><stop offset=".4" stop-color="#686968"/><stop offset=".78" stop-color="#5f605f"/><stop offset=".92" stop-color="#525252"/><stop offset="1" stop-color="#464646"/></linearGradient>
        <linearGradient id="pitR" gradientUnits="userSpaceOnUse" x1="2650" y1="0" x2="2830" y2="0"><stop offset="0" stop-color="#454545"/><stop offset=".2" stop-color="#525352"/><stop offset=".45" stop-color="#636463"/><stop offset="1" stop-color="#707271"/></linearGradient>
        <radialGradient id="cor"><stop offset="0" stop-color="#333" stop-opacity=".95"/><stop offset=".3" stop-color="#3a3a3a" stop-opacity=".6"/><stop offset=".6" stop-color="#444" stop-opacity=".25"/><stop offset=".85" stop-color="#555" stop-opacity=".05"/><stop offset="1" stop-color="#555" stop-opacity="0"/></radialGradient>
        <linearGradient id="low1" gradientUnits="userSpaceOnUse" x1="1850" y1="2560" x2="1800" y2="2680"><stop offset="0" stop-color="#585858"/><stop offset="1" stop-color="#6c6d6c"/></linearGradient>
        <linearGradient id="low2" gradientUnits="userSpaceOnUse" x1="2200" y1="2500" x2="2260" y2="2600"><stop offset="0" stop-color="#555"/><stop offset="1" stop-color="#656665"/></linearGradient>
        <filter id="soft" x="-5%" y="-5%" width="110%" height="110%"><feGaussianBlur stdDeviation="10"/></filter>
        <clipPath id="hole"><path d="M2642 978 3022 1198 2016 1779 1636 1560Z"/></clipPath>
        <clipPath id="top"><path d="M710 1563 948 1461 1050 1560 2014 2120 3609 1215 3807 1154 3946 1197 2014 2313Z"/></clipPath>
      </defs>
      <path d="M13 505H4640V2815H13Z" fill="url(#bg)"/>
      <path d="M1634 2507 2014 2727 2014 2500Z" fill="url(#low1)"/>
      <path d="M2014 2500V2727L2606 2385Z" fill="url(#low2)"/>
      <path d="M3946 1197 3996 1527 3946 1804Z" fill="#b7c1c9"/>
      <path d="M1996 1013 1517 1218 1578 1253Z" fill="url(#ul2)"/>
      <path d="M1517 1218 1150 1368 960 1462 1081 1545 1578 1253Z" fill="url(#ul)"/>
      <path d="M3197 956 3475 1046 3400 1073Z" fill="url(#ur)"/>
      <path d="M3475 1046 3807 1154 3610 1260 3560 1200 3398 1073Z" fill="url(#ur2)"/>
      <path d="M710 1563 948 1461 1081 1545 2014 2130 3609 1245 3807 1154 3946 1197 2014 2313Z" fill="url(#strip)"/>
      <g clip-path="url(#top)"><path d="M1046 1580 2014 2130 3609 1225" fill="none" stroke="#777" stroke-opacity=".3" stroke-width="14" filter="url(#soft)"/></g>
      <path d="M710 1563 2014 2313V2627L880 2265 710 2167Z" fill="#757575"/>
      <path d="M2014 2313 3946 1197V1804L3781 1900 2610 2384 2014 2627Z" fill="#757c82"/>
      <path d="M2014 2313 2070 2502 2014 2627Z" fill="#717372"/>
      <path d="M948 1461 1084 1540M1517 1218 1580 1254M3475 1046 3396 1075" stroke="#666" stroke-width="3"/>
      <path d="M3807 1154 3440 1336" stroke="#666" stroke-width="3"/>
      <path d="M1046 1565V1587L2014 2122V2112Z" fill="#565656"/>
      <path d="M3610 1198V1234L3401 1350 2014 2122V2112Z" fill="#4f4f4f"/>
      <path d="M2645 638 3610 1198 2014 2118 1046 1565Z" fill="#e2e2e2"/>
      <path d="M1046 1567 2014 2118 3610 1199" fill="none" stroke="#d2d2d2" stroke-width="3"/>
      <g clip-path="url(#hole)">
        <path d="M1636 978H2652V1780H1636Z" fill="url(#pitL)"/>
        <path d="M2652 978H3022V1780H2652Z" fill="url(#pitR)"/>
        <ellipse cx="1660" cy="1590" rx="250" ry="170" fill="url(#cor)" transform="rotate(20 1660 1590)"/>
        <ellipse cx="3010" cy="1200" rx="260" ry="130" fill="url(#cor)" transform="rotate(10 3010 1200)"/>
      </g>
      <path d="M1636 1560 2642 978M2016 1779 3022 1198" stroke="#2e9c3c" stroke-width="4"/>
      <path d="M2642 978 3022 1198" stroke="#8d9a8e" stroke-width="3"/>
      <g fill="#3c9ac0" stroke="#3c9ac0" stroke-width="10">
        <path d="M1802 796V1316M2022 796V1336M2243 796V1626"/>
        <g stroke="none"><circle cx="1802" cy="1315" r="20"/><circle cx="2022" cy="1335" r="20"/><circle cx="2243" cy="1625" r="20"/></g>
      </g>
      <g fill="#3c9ac0" class="font-[Lato,sans-serif] text-[72px]" text-anchor="middle"><text x="1802" y="756">1</text><text x="2022" y="756">2</text><text x="2243" y="756">3</text></g>
    </svg>

    <!-- View cube -->
    <svg class="absolute right-[26px] top-[83px] w-[402px] h-[280px]" viewBox="0 0 1380 960" role="img" aria-label="ViewCube">
      <defs><radialGradient id="sh"><stop offset="0" stop-color="#777" stop-opacity=".8"/><stop offset="1" stop-color="#999" stop-opacity="0"/></radialGradient>
      <linearGradient id="cf" x1="0" y1="0" x2="0" y2="1"><stop offset="0" stop-color="#ececec"/><stop offset="1" stop-color="#d2d2d2"/></linearGradient></defs>
      <g fill="none" stroke="#a2a2a2" stroke-width="6"><ellipse cx="790" cy="630" rx="495" ry="268"/><ellipse cx="790" cy="600" rx="378" ry="215"/></g>
      <ellipse cx="790" cy="600" rx="340" ry="170" fill="url(#sh)"/>
      <g fill="#e6e6e6" stroke="#8f8f8f" stroke-width="5" text-anchor="middle" class="text-[110px] font-bold font-['Open_Sans',sans-serif]">
        <ellipse cx="1168" cy="750" rx="75" ry="44"/><ellipse cx="1168" cy="750" rx="36" ry="22"/>
        <text transform="matrix(1 .2 -.5 .8 478 462)">W</text>
        <text transform="matrix(1 .2 -.5 .6 1050 430)">N</text>
        <text transform="matrix(1.500 -.3 1.200 .8 440 850)">S</text>
      </g>
      <g stroke="#858585" stroke-width="5" stroke-linejoin="round">
        <path d="M762 130 1050 228 822 362 528 248Z" fill="#ebebeb"/>
        <path d="M528 248 822 362 816 692 542 565Z" fill="url(#cf)"/>
        <path d="M822 362 1050 228 1030 535 816 692Z" fill="url(#cf)"/>
      </g>
      <path d="M812 316 864 340 862 395 816 420 760 395 762 340Z" fill="#cfd4dc" opacity=".55"/>
      <g fill="#868b92" class="font-['Open_Sans',sans-serif] font-semibold" text-anchor="middle">
        <text class="text-[72px]" transform="matrix(.95 .4 0 1.100 675 498)">VORNE</text>
        <text class="text-[72px]" transform="matrix(.66 -.45 0 1.100 933 480)">RECHTS</text>
        <text class="text-[72px]" transform="matrix(.9 .3 -.8 .6 785 258)">OBEN</text>
      </g>
    </svg>

    <!-- Navigation bar -->
    <div class="absolute right-[1px] top-[379px] w-[78px] h-[259px] rounded-lg border-[3px] border-[#9b9b9b] bg-[#e2e2e2]/60">
      <svg class="block w-full h-full" viewBox="0 0 72 253" fill="none" stroke="#8d9198" stroke-width="2" aria-label="Navigationsleiste">
        <circle cx="59" cy="12" r="8" fill="#ddd" stroke="#9a9a9a"/><path d="M55 8 63 16M63 8 55 16" stroke="#9a9a9a"/>
        <path d="M61 68A24 24 0 1 1 37 44H58Q61 44 61 47Z" fill="#e8eaef"/><circle cx="37" cy="68" r="13"/><path d="M27 77 20 84M47 77 54 84"/>
        <path d="M31 110H43L37 116Z" fill="#7f858e" stroke="none"/><path d="M9 127H65" stroke="#a5a5a5"/>
        <path d="M20 147H43V170H20Z" fill="#b2c99e" stroke="#86b38a" stroke-width="3"/><circle cx="42" cy="169" r="8" fill="#e6f0ee" stroke="#999"/><path d="M48 174 55 180" stroke="#8d8d8d" stroke-width="4"/>
        <path d="M31 203H43L37 209Z" fill="#7f858e" stroke="none"/>
        <circle cx="59" cy="240" r="8" fill="#ddd" stroke="#9a9a9a"/><path d="M54 238H64M56 242H62" stroke="#9a9a9a"/>
      </svg>
    </div>
  </div>
  <!-- vertical scroll bar -->
  <div class="w-[34px] mr-[5px] bg-[#f0f0f0] flex flex-col items-center pt-[14px] pb-[11px]">
    <svg class="w-[18px] h-3" viewBox="0 0 18 12"><path d="M1 10 9 3 17 10" fill="none" stroke="#444" stroke-width="5"/></svg>
    <div class="mt-[878px] w-full h-[35px] bg-[#cdcdcd]"></div>
    <svg class="mt-auto w-[18px] h-3" viewBox="0 0 18 12"><path d="M1 2 9 9 17 2" fill="none" stroke="#444" stroke-width="5"/></svg>
  </div>
</div>

<!-- View control bar -->
<div class="h-[40px] shrink-0 ml-[7px] pl-1 pr-[5px] pb-[5px] bg-white">
  <div class="h-[35px] bg-[#f0f0f0] flex items-center pl-[55px] text-black">
    <button class="w-[120px] text-left">1 : 96</button>
    <div class="flex items-center gap-[11px] pb-[3px]">
      <button aria-label="Detaillierungsgrad"><svg class="block size-[35px]"><use href="#v1"/></svg></button>
      <button aria-label="Visueller Stil"><svg class="block size-[35px]"><use href="#v2"/></svg></button>
      <button aria-label="Sonnenbahn"><svg class="block size-[35px]"><use href="#v3"/></svg></button>
      <button aria-label="Schatten"><svg class="block size-[35px]"><use href="#v4"/></svg></button>
      <button aria-label="Rendern"><svg class="block size-[35px]"><use href="#v5"/></svg></button>
      <button aria-label="Zuschneiden"><svg class="block size-[35px]"><use href="#v6"/></svg></button>
      <button aria-label="Zuschneidebereich"><svg class="block size-[35px]"><use href="#v7"/></svg></button>
      <button aria-label="Ansicht sperren"><svg class="block size-[35px]"><use href="#v8"/></svg></button>
      <button aria-label="Ausblenden"><svg class="block size-[35px]"><use href="#v9"/></svg></button>
      <button aria-label="Verdeckte anzeigen"><svg class="block size-[35px]"><use href="#v10"/></svg></button>
      <button aria-label="Ansichtseigenschaften"><svg class="block size-[35px]"><use href="#v11"/></svg></button>
      <button aria-label="Analysemodell"><svg class="block size-[35px]"><use href="#v12"/></svg></button>
      <button aria-label="Verschiebung"><svg class="block size-[35px]"><use href="#v13"/></svg></button>
      <button aria-label="Abhängigkeiten"><svg class="block size-[35px]"><use href="#v14"/></svg></button>
      <svg class="ml-3 w-3 h-[18px]" viewBox="0 0 12 18"><path d="M10 1 3 9 10 17" fill="none" stroke="#444" stroke-width="4"/></svg>
    </div>
    <div class="ml-[1659px] w-[38px] h-[33px] bg-[#cdcdcd]"></div>
    <svg class="ml-auto w-3 h-[18px]" viewBox="0 0 12 18"><path d="M2 1 9 9 2 17" fill="none" stroke="#444" stroke-width="5"/></svg>
    <svg class="ml-[25px] mr-[7px] mt-1 size-[18px]" viewBox="0 0 18 18"><path d="M14 0H18V4H14ZM14 7H18V11H14ZM14 14H18V18H14ZM7 7H11V11H7ZM7 14H11V18H7ZM0 14H4V18H0Z" fill="#b5b5b5"/></svg>
  </div>
</div>
</main>

<!-- Status bar -->
<footer class="h-[59px] shrink-0 flex items-center pl-[11px] pb-[3px] text-black">
  <p class="w-[1671px]">Zur Auswahl klicken, TABULATOR für andere Auswahl, STRG zum Hinzufügen, UMSCHALT zum Aufheben der Auswahl.</p>
  <button aria-label="Bearbeitungsbereiche"><svg class="block size-9"><use href="#t-ws"/></svg></button>
  <div class="ml-[17px] relative">
    <select class="block appearance-none w-[451px] h-10 bg-white" aria-label="Aktiver Bearbeitungsbereich"><option></option></select>
    <svg class="absolute right-[7px] top-4 w-[18px] h-3 pointer-events-none" viewBox="0 0 18 12"><path d="M1 1 9 10 17 1" fill="none" stroke="#aaa" stroke-width="2"/></svg>
  </div>
  <button class="ml-[18px] flex items-center gap-[9px]"><svg class="size-9"><use href="#t-ef"/></svg>:0</button>
  <button class="ml-[53px]" aria-label="Entwurfsoptionen"><svg class="block size-9"><use href="#t-do"/></svg></button>
  <button class="ml-5" aria-label="Aktiv"><svg class="block size-9"><use href="#t-act"/></svg></button>
  <div class="ml-[19px] relative">
    <select disabled class="block appearance-none w-[451px] h-10 bg-white text-[#8a8a8a] pl-[5px] opacity-100" aria-label="Entwurfsoption"><option>Basisvorlage</option></select>
    <svg class="absolute right-[7px] top-4 w-[18px] h-3 pointer-events-none" viewBox="0 0 18 12"><path d="M1 1 9 10 17 1" fill="none" stroke="#aaa" stroke-width="2"/></svg>
  </div>
  <div class="ml-auto flex items-center gap-[21px]">
    <button aria-label="Verknüpfungen auswählen"><svg class="block size-[37px]"><use href="#t-link"/></svg></button>
    <button aria-label="Unterlagen auswählen"><svg class="block size-[37px]"><use href="#t-und"/></svg></button>
    <button aria-label="Fixierte auswählen"><svg class="block size-[37px]"><use href="#t-pin"/></svg></button>
    <button aria-label="Nach Fläche auswählen"><svg class="block size-[37px]"><use href="#t-face"/></svg></button>
    <button aria-label="Ziehen bei Auswahl"><svg class="block size-[37px]"><use href="#t-drag"/></svg></button>
    <svg class="size-[37px]"><use href="#t-gear"/></svg>
    <button class="-ml-[6px] flex items-center"><svg class="size-[37px]"><use href="#t-fil"/></svg>:0</button>
  </div>
  <div class="ml-[143px] mr-[41px] w-5 h-[46px] border-x-2 border-[#bcbcbc]"></div>
</footer>
</body>
</html>
